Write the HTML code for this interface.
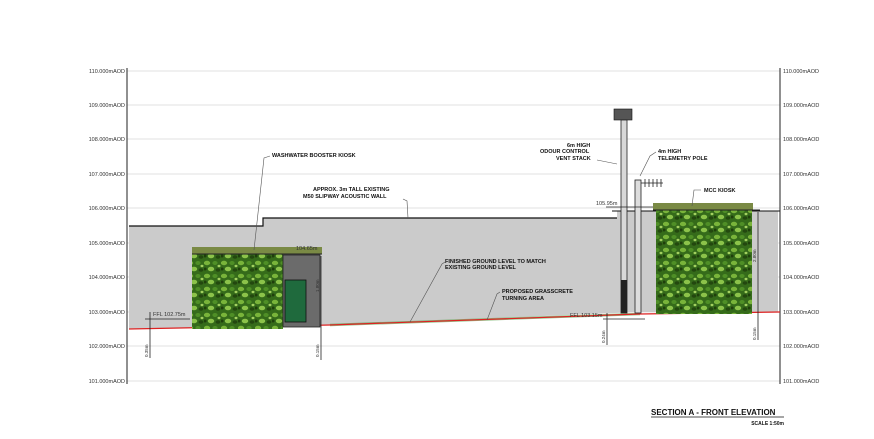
<!DOCTYPE html>
<html><head><style>
body{margin:0;background:#fff;}
svg{display:block;font-family:"Liberation Sans",sans-serif;}
.l{font-size:5.5px;fill:#333;}
.b{font-size:5.5px;fill:#111;font-weight:bold;}
</style></head><body>
<svg width="874" height="439" viewBox="0 0 874 439">
<defs>
<pattern id="ivy" width="17" height="13" patternUnits="userSpaceOnUse">
<rect width="17" height="13" fill="#356b1a"/>
<ellipse cx="3" cy="3" rx="3.2" ry="2.2" fill="#79b43a"/>
<ellipse cx="11" cy="3" rx="2.6" ry="2" fill="#4f8f26"/>
<ellipse cx="7" cy="9" rx="3.2" ry="2.3" fill="#8cc34a"/>
<ellipse cx="14" cy="10" rx="2.4" ry="1.8" fill="#23480f"/>
<ellipse cx="1" cy="9" rx="1.6" ry="1.5" fill="#1f3f0c"/>
<ellipse cx="15" cy="6" rx="1.5" ry="1.2" fill="#a3d060"/>
</pattern>
</defs>
<g stroke="#d8d8d8" stroke-width="0.8">
<line x1="127" y1="71" x2="780" y2="71"/><line x1="127" y1="105" x2="780" y2="105"/>
<line x1="127" y1="139" x2="780" y2="139"/><line x1="127" y1="174" x2="780" y2="174"/>
<line x1="127" y1="208" x2="780" y2="208"/><line x1="127" y1="243" x2="780" y2="243"/>
<line x1="127" y1="277" x2="780" y2="277"/><line x1="127" y1="312" x2="780" y2="312"/>
<line x1="127" y1="346" x2="780" y2="346"/><line x1="127" y1="381" x2="780" y2="381"/>
</g>
<line x1="127" y1="68" x2="127" y2="384" stroke="#222" stroke-width="1"/>
<line x1="780" y1="68" x2="780" y2="384" stroke="#222" stroke-width="1"/>
<g class="l" text-anchor="end">
<text x="125" y="73">110.000mAOD</text><text x="125" y="107">109.000mAOD</text>
<text x="125" y="141">108.000mAOD</text><text x="125" y="176">107.000mAOD</text>
<text x="125" y="210">106.000mAOD</text><text x="125" y="245">105.000mAOD</text>
<text x="125" y="279">104.000mAOD</text><text x="125" y="314">103.000mAOD</text>
<text x="125" y="348">102.000mAOD</text><text x="125" y="383">101.000mAOD</text>
</g>
<g class="l">
<text x="783" y="73">110.000mAOD</text><text x="783" y="107">109.000mAOD</text>
<text x="783" y="141">108.000mAOD</text><text x="783" y="176">107.000mAOD</text>
<text x="783" y="210">106.000mAOD</text><text x="783" y="245">105.000mAOD</text>
<text x="783" y="279">104.000mAOD</text><text x="783" y="314">103.000mAOD</text>
<text x="783" y="348">102.000mAOD</text><text x="783" y="383">101.000mAOD</text>
</g>
<path d="M129 226 H263 V218 H617 V211 H778 V312 H640 L330 325 L129 329 Z" fill="#cbcbcb"/>
<path d="M129 226 H263 V218 H617" fill="none" stroke="#111" stroke-width="1.2"/>
<line x1="612" y1="211" x2="780" y2="211" stroke="#111" stroke-width="1"/>
<path d="M330 325 L640 314" fill="none" stroke="#4a9a3a" stroke-width="2.5" opacity="0.6"/>
<path d="M129 329 L330 325 L640 314 L780 312" fill="none" stroke="#d22" stroke-width="1.2"/>
<rect x="192" y="247" width="130" height="7" fill="#7a8a45"/>
<rect x="192" y="254" width="91" height="75" fill="url(#ivy)"/>
<rect x="283" y="255" width="37" height="72" fill="#6b6b6b" stroke="#222" stroke-width="0.8"/>
<rect x="285" y="280" width="21" height="42" fill="#1f6a3d" stroke="#111" stroke-width="0.8"/>
<line x1="192" y1="254" x2="322" y2="254" stroke="#222" stroke-width="1"/>
<line x1="321" y1="256" x2="321" y2="360" stroke="#222" stroke-width="0.8"/>
<line x1="150" y1="312" x2="150" y2="358" stroke="#222" stroke-width="0.8"/>
<line x1="145" y1="319" x2="190" y2="319" stroke="#222" stroke-width="0.8"/>
<text class="l" x="153" y="316">FFL 102.75m</text>
<text class="l" x="296" y="250">104.65m</text>
<g class="l" style="font-size:4.5px">
<text transform="translate(148 357) rotate(-90)">0.35m</text>
<text transform="translate(319 357) rotate(-90)">0.15m</text>
<text transform="translate(605 343) rotate(-90)">0.24m</text>
<text transform="translate(756 340) rotate(-90)">0.15m</text>
<text transform="translate(319 292) rotate(-90)">1.80m</text>
<text transform="translate(756 262) rotate(-90)">2.80m</text>
</g>
<rect x="614" y="109" width="18" height="11" fill="#555" stroke="#111" stroke-width="0.6"/>
<rect x="621" y="120" width="6" height="193" fill="#d8d8d8" stroke="#222" stroke-width="0.8"/>
<rect x="621" y="280" width="6" height="33" fill="#222"/>
<rect x="635" y="180" width="6" height="133" fill="#ddd" stroke="#222" stroke-width="0.8"/>
<path d="M641 183 H663 M645 179 v8 M649 179 v8 M653 179 v8 M657 179 v8 M661 179 v8" stroke="#222" stroke-width="0.8"/>
<line x1="606" y1="207" x2="660" y2="207" stroke="#222" stroke-width="0.8"/>
<text class="l" x="596" y="205">105.95m</text>
<text class="l" x="570" y="317">FFL 103.15m</text>
<line x1="603" y1="319" x2="645" y2="319" stroke="#222" stroke-width="0.8"/>
<line x1="607" y1="313" x2="607" y2="345" stroke="#222" stroke-width="0.8"/>
<rect x="653" y="203" width="100" height="7" fill="#7a8a45"/>
<rect x="656" y="210" width="96" height="104" fill="url(#ivy)"/>
<line x1="653" y1="210" x2="760" y2="210" stroke="#222" stroke-width="1"/>
<line x1="758" y1="212" x2="758" y2="340" stroke="#222" stroke-width="0.8"/>
<g class="b">
<text x="272" y="157">WASHWATER BOOSTER KIOSK</text>
<text x="313" y="191">APPROX. 3m TALL EXISTING</text>
<text x="303" y="198">M50 SLIPWAY ACOUSTIC WALL</text>
<text x="445" y="263">FINISHED GROUND LEVEL TO MATCH</text>
<text x="445" y="269">EXISTING GROUND LEVEL</text>
<text x="502" y="293">PROPOSED GRASSCRETE</text>
<text x="502" y="300">TURNING AREA</text>
<text x="567" y="147">6m HIGH</text>
<text x="540" y="153">ODOUR CONTROL</text>
<text x="556" y="160">VENT STACK</text>
<text x="658" y="153">4m HIGH</text>
<text x="658" y="160">TELEMETRY POLE</text>
<text x="704" y="192">MCC KIOSK</text>
</g>
<g stroke="#555" stroke-width="0.6" fill="none">
<path d="M270 156 L264 158 L254 250"/>
<path d="M403 199 L407 201 L408 218"/>
<path d="M445 262 L442 264 L410 322"/>
<path d="M500 292 L497 294 L487 320"/>
<path d="M597 160 L617 164"/>
<path d="M656 152 L650 156 L640 176"/>
<path d="M701 190 L694 190 L692 206"/>
</g>
<text x="651" y="415" style="font-size:8px;font-weight:bold;fill:#111">SECTION A - FRONT ELEVATION</text>
<line x1="651" y1="417" x2="784" y2="417" stroke="#111" stroke-width="0.8"/>
<text class="b" x="784" y="425" text-anchor="end" style="font-size:5px">SCALE 1:50m</text>
</svg>
</body></html>
